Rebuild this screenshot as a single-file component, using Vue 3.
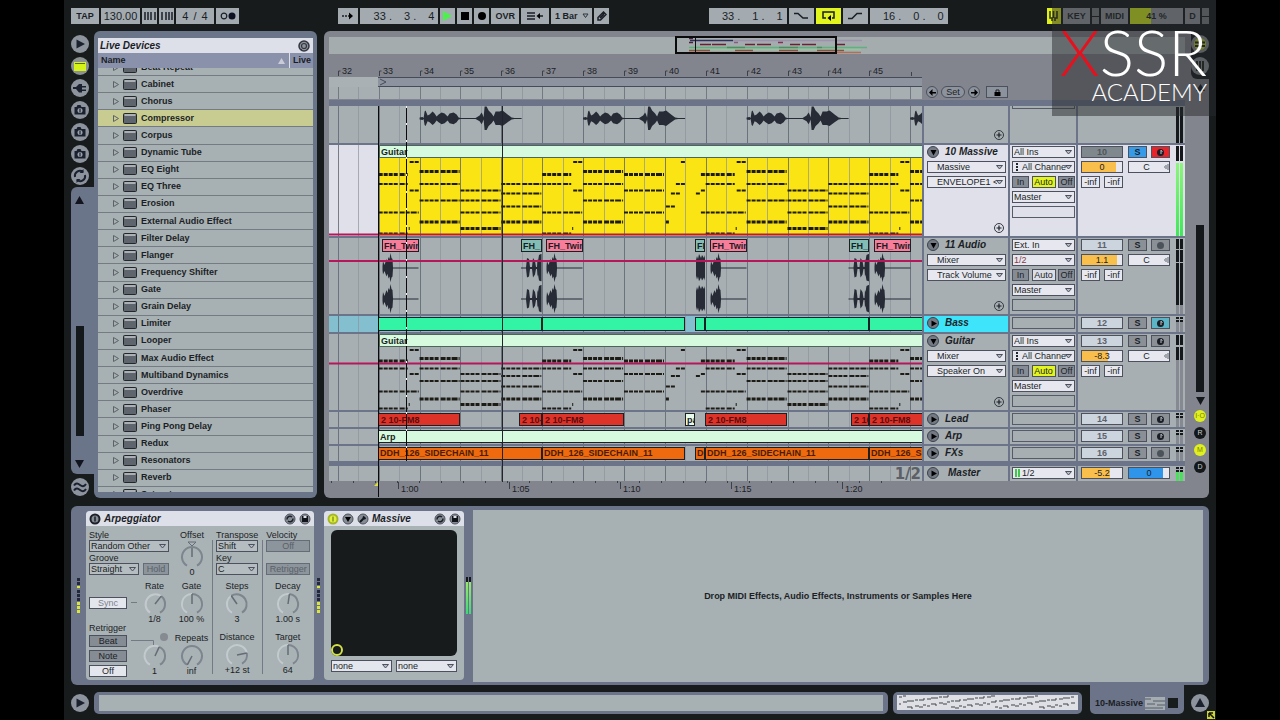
<script setup>
const ORIGIN = 329
const BAR = 40.88
const barX = (n) => 378.7 - ORIGIN + (n - 33) * BAR
const barNumbers = [32, 33, 34, 35, 36, 37, 38, 39, 40, 41, 42, 43, 44, 45]
const gridLines = Array.from({ length: 60 }, (_, i) => ({ x: Math.round(barX(32 + i / 2)) + 0.5, half: i % 2 === 1 }))
const timeMarks = [['1:00', 398], ['1:05', 509], ['1:10', 620], ['1:15', 731], ['1:20', 842]]

const devices = ['Beat Repeat', 'Cabinet', 'Chorus', 'Compressor', 'Corpus', 'Dynamic Tube', 'EQ Eight', 'EQ Three', 'Erosion',
  'External Audio Effect', 'Filter Delay', 'Flanger', 'Frequency Shifter', 'Gate', 'Grain Delay', 'Limiter', 'Looper',
  'Max Audio Effect', 'Multiband Dynamics', 'Overdrive', 'Phaser', 'Ping Pong Delay', 'Redux', 'Resonators', 'Reverb', 'Saturator']

const browserTabs = [
  { label: 'Show browser', kind: 'play' },
  { label: 'Live devices', kind: 'device' },
  { label: 'Plug-in devices', kind: 'plug' },
  { label: 'File browser 1', kind: 'folder' },
  { label: 'File browser 2', kind: 'folder' },
  { label: 'File browser 3', kind: 'folder' },
  { label: 'Hot-swap', kind: 'swap' }
]

/* Mirrored outline around a centre line */
function wave(points, x0, cy) {
  const up = points.map(([x, h]) => `${(x0 + x).toFixed(1)} ${(cy - h).toFixed(1)}`)
  const down = [...points].reverse().map(([x, h]) => `${(x0 + x).toFixed(1)} ${(cy + h * 0.95).toFixed(1)}`)
  return `M${up.join('L')}L${down.join('L')}Z`
}
const vox = [[0, 1], [3, 1.5], [4, 0.5], [5, 7], [6, 8], [8, 3], [10, 4], [13, 7], [15, 5], [17, 2], [19, 4], [22, 6], [25, 5], [28, 2], [30, 5],
  [34, 6], [37, 4], [39, 1], [41, 0.5], [56, 0.5], [60, 3], [62, 6], [63, 4], [64, 1], [65, 12], [67, 12], [69, 8], [72, 5], [74, 2], [76, 7],
  [80, 7], [83, 8], [88, 4], [92, 1], [95, 0.5], [102, 0.5]]
const hit = [[0, 2], [0.5, 7], [2, 3], [4, 9], [5, 6], [6, 11], [7, 9], [8, 15], [9, 10], [10, 9], [10.5, 0.5], [36, 0.5]]
const riser = [[0, 0.4], [5, 0.4], [6, 10], [8, 9], [9, 1], [11, 1], [12, 10], [14, 7], [15, 1], [16, 1], [16.5, 9], [17, 7], [18, 13], [20, 14], [20.5, 14]]
const block = [[0, 8], [1, 12], [2, 9], [3, 14], [5, 10], [6, 13], [8, 10], [9, 13]]

const voxWaves = [34, 38, 42, 46].map((b) => wave(vox, barX(b), 12.5))
const audioWaves = []
for (const cy of [30, 61]) {
  for (const x of [382.5, 546.5, 710.5, 874.5]) audioWaves.push(wave(hit, x - ORIGIN, cy))
  for (const x of [521, 848.5]) audioWaves.push(wave(riser, x - ORIGIN, cy))
  audioWaves.push(wave(block, 696 - ORIGIN, cy))
}

/* Note rows: a..l from highest to lowest pitch */
const pitches = {
  massive: { a: 17, b: 26.5, c: 29.5, d: 39, e: 45.5, f: 48.5, g: 55.5, h: 61.5, i: 67.5, j: 77, k: 83.5, l: 88.5 },
  guitar: { a: 16, b: 24.5, c: 27, d: 34.5, e: 40, f: 42, g: 47, h: 52.5, i: 57.5, j: 65, k: 70.5, l: 74.5 }
}
const bars = {
  A: [['c', 0, 29], ['d', 0, 29], ['i', 0, 40], ['l', 0, 29], ['a', 31, 40], ['e', 31, 40], ['k', 30, 31]],
  B: [['b', 0, 40], ['d', 0, 40], ['g', 0, 40], ['j', 0, 40]],
  C: [['e', 0, 40], ['g', 0, 40], ['i', 0, 40], ['k', 0, 40]],
  D: [['d', 0, 40], ['f', 0, 40], ['h', 0, 40], ['j', 0, 40]],
  E: [['c', 0, 40], ['e', 0, 40], ['i', 0, 40]],
  F: [['j', 1, 4], ['h', 1, 10], ['f', 6, 15], ['d', 11, 20], ['a', 16, 20], ['f', 31, 36], ['c', 36, 40], ['e', 36, 40], ['i', 36, 40]]
}
const song = ['A', 'B', 'C', 'D', 'A', 'B', 'E', 'F', 'A', 'B', 'C', 'D', 'A', 'B']
function notes(kind) {
  const out = []
  song.forEach((name, n) => bars[name].forEach(([p, s, e]) => {
    out.push({ d: `M${(barX(33 + n) + s).toFixed(1)} ${pitches[kind][p]}H${(barX(33 + n) + e).toFixed(1)}`, thick: 'jcbk'.includes(p) })
  }))
  return out
}

const allIns = { from: 'All Ins', channel: 'All Channels', auto: true }
const spans = (pairs, extra) => pairs.map(([a, b, t]) => ({ a, b, t, ...extra }))
const tracks = [
  { id: 't9', kind: 'cut', plus: true, waves: voxWaves, clips: [] },
  { id: 't10', kind: 'tall', name: '10 Massive', selected: true, open: true, dev: 'Massive', par: 'ENVELOPE1 <', io: allIns, num: 10, vol: '0', fill: 84,
    off: true, solo: true, arm: 'on', meter: 'sounding', body: true, notes: notes('massive'), line: 89.5, plus: true,
    clips: spans([[379, 923, 'Guitar']], { k: 'title' }) },
  { id: 't11', kind: 'mid', name: '11 Audio', open: true, dev: 'Mixer', par: 'Track Volume', io: { from: 'Ext. In', channel: '1/2', red: true }, num: 11, vol: '1.1',
    fill: 87, arm: 'dot', meter: 'long', waves: audioWaves, line: 23, plus: true,
    clips: [...spans([[382, 419, 'FH_Twin'], [546, 583, 'FH_Twin'], [710, 747, 'FH_Twin'], [874, 911, 'FH_Twin']], { k: 'pink' }),
      ...spans([[521, 542, 'FH_'], [695, 705, 'FH'], [849, 869, 'FH_']], { k: 'teal' })] },
  { id: 't12', kind: 'bass', name: 'Bass', num: 12, arm: 'blue',
    clips: spans([[378, 542], [542, 685], [695, 705], [705, 869], [869, 925]], { k: 'green' }) },
  { id: 't13', kind: 'mid', name: 'Guitar', open: true, dev: 'Mixer', par: 'Speaker On', io: allIns, num: 13, vol: '-8.3', fill: 64, arm: 'note', meter: 'short',
    notes: notes('guitar'), line: 29.5, plus: true, clips: spans([[379, 923, 'Guitar']], { k: 'title' }) },
  { id: 't14', kind: 'thin', name: 'Lead', num: 14, arm: 'note',
    clips: [...spans([[378, 460, '2 10-FM8'], [519, 542, '2 10-FM8'], [542, 624, '2 10-FM8'], [705, 787, '2 10-FM8'], [851, 869, '2 10-FM8'], [869, 925, '2 10-FM8']], { k: 'red' }),
      { a: 685, b: 695, t: 'pad', k: 'white' }] },
  { id: 't15', kind: 'thin', name: 'Arp', num: 15, arm: 'note', clips: spans([[378, 925, 'Arp']], { k: 'mint' }) },
  { id: 't16', kind: 'thin', name: 'FXs', num: 16, arm: 'dot',
    clips: spans([[378, 542, 'DDH_126_SIDECHAIN_11'], [542, 685, 'DDH_126_SIDECHAIN_11'], [695, 705, 'DDH'], [705, 869, 'DDH_126_SIDECHAIN_11'], [869, 925, 'DDH_126_SIDECHAIN_11']], { k: 'orange' }) },
  { id: 'master', kind: 'master', name: 'Master', vol: '-5.2', fill: 70, meter: 'main', clips: [] }
]
const clipStyle = (c) => ({ left: c.a - ORIGIN + 'px', width: c.b - c.a + 'px' })

const overview = [
  ['#303060', 690, 733, 40.5], ['#a090b0', 733, 862, 40.5], ['#6a2030', 700, 711, 44.5], ['#6a2030', 712, 726, 44.5], ['#6a2030', 745, 755, 44.5],
  ['#6a2030', 757, 771, 44.5], ['#6a2030', 790, 800, 44.5], ['#6a2030', 802, 816, 44.5], ['#6a2030', 835, 845, 44.5], ['#60b080', 689, 862, 47.5],
  ['#4d8d60', 727, 745, 47.5], ['#4d8d60', 779, 798, 47.5], ['#4d8d60', 817, 822, 47.5], ['#60b080', 862, 867, 47.5], ['#8fc79a', 689, 861, 49.5],
  ['#8a5040', 689, 710, 50.5], ['#8a5040', 735, 753, 50.5], ['#8a5040', 779, 798, 50.5], ['#8a5040', 817, 844, 50.5], ['#b07058', 689, 861, 52.5],
  ['#4b2038', 689, 693, 38.5], ['#4b2038', 689, 693, 42.5], ['#806080', 734, 738, 42.5], ['#803050', 778, 783, 42.5]
]

/* Knob face centred on 12,12; angle in degrees clockwise from 12 o'clock */
function hand(angle) {
  const r = (angle * Math.PI) / 180
  return `M12 12L${(12 + 10 * Math.sin(r)).toFixed(1)} ${(12 - 10 * Math.cos(r)).toFixed(1)}`
}
function ring(a0, a1) {
  const pt = (a) => `${(12 + 10 * Math.sin((a * Math.PI) / 180)).toFixed(1)} ${(12 - 10 * Math.cos((a * Math.PI) / 180)).toFixed(1)}`
  return `M${pt(a0)}A10 10 0 ${a1 - a0 > 180 ? 1 : 0} 1 ${pt(a1)}`
}
const knobs = {
  rate: { label: 'Rate', value: '1/8', angle: 38 }, gate: { label: 'Gate', value: '100 %', angle: 0 },
  beat: { label: '', value: '1', angle: 25 }, repeats: { label: 'Repeats', value: 'inf', angle: -152, full: true },
  steps: { label: 'Steps', value: '3', angle: -35 }, distance: { label: 'Distance', value: '+12 st', angle: 78 },
  decay: { label: 'Decay', value: '1.00 s', angle: 8 }, target: { label: 'Target', value: '64', angle: 0 }
}
const knobRows = [[knobs.rate, knobs.gate], [knobs.beat, knobs.repeats]]
const knobCols = [[knobs.steps, knobs.distance], [knobs.decay, knobs.target]]
const miniNotes = Array.from({ length: 44 }, (_, i) => ({ x: 2 + i * 4, y: 2 + ((i * 5) % 11), w: 3 + (i % 3) }))
</script>

<template>
  <div class="screen">
    <div class="app">
      <header class="toolbar">
        <div class="group">
          <button class="tb tap">TAP</button>
          <input class="tb tempo" value="130.00" aria-label="Tempo">
          <button class="tb nudge" aria-label="Nudge down"><svg width="12" height="8"><path d="M1 0v8M4 0v8M7 0v8M11 0v8" stroke="#1b1e26" stroke-width="1.5" /></svg></button>
          <button class="tb nudge" aria-label="Nudge up"><svg width="12" height="8"><path d="M1 0v8M5 0v8M8 0v8M11 0v8" stroke="#1b1e26" stroke-width="1.5" /></svg></button>
          <button class="tb sig"><span>4</span><span>/</span><span>4</span></button>
          <button class="tb metro" aria-label="Metronome"><svg width="16" height="8"><circle cx="4" cy="4" r="2.8" fill="none" stroke="#1b1e26" stroke-width="1.2" /><circle cx="12" cy="4" r="3.5" fill="#0c1020" /></svg></button>
        </div>
        <div class="group">
          <button class="tb follow" aria-label="Follow"><svg width="12" height="8"><path d="M0 4h2M3 4h2M6 4h2" stroke="#1b1e26" stroke-width="1.5" /><path d="M7 .5 11 4 7 7.5z" /></svg></button>
          <button class="tb pos"><span>33 .</span><span>3 .</span><span>4</span></button>
          <button class="tb key1" aria-label="Play"><svg width="11" height="10"><path d="M1 0 10 5 1 10z" fill="#4bf24b" /></svg></button>
          <button class="tb key1" aria-label="Stop"><svg width="8" height="8"><path d="M0 0h8v8H0z" /></svg></button>
          <button class="tb key1" aria-label="Record"><svg width="8" height="8"><circle cx="4" cy="4" r="4" /></svg></button>
          <button class="tb ovr">OVR</button>
          <button class="tb ovr" aria-label="Back to arrangement"><svg width="16" height="8"><path d="M0 1h8M0 4h8M0 7h8M11 4h5" stroke="#1b1e26" stroke-width="1.4" /><path d="M13 1v6L9.5 4z" /></svg></button>
          <button class="tb quant">1 Bar <svg width="7" height="6"><path d="M1 1h5L3.5 4.5z" fill="none" stroke="#30343c" /></svg></button>
          <button class="tb key1" aria-label="Draw mode"><svg width="10" height="10"><path d="M1 9V6.5L6.5 1 9 3.5 3.5 9z" fill="none" stroke="#1b1e26" stroke-width="1.5" /><path d="M3 7 7 3" stroke="#1b1e26" stroke-width="2" /></svg></button>
        </div>
        <div class="group">
          <button class="tb pos"><span>33 .</span><span>1 .</span><span>1</span></button>
          <button class="tb punch" aria-label="Punch in"><svg width="14" height="8"><path d="M0 1.5h4L9 6h5" fill="none" stroke="#1b1e26" stroke-width="1.5" /></svg></button>
          <button class="tb punch lit" aria-label="Loop"><svg width="13" height="10"><path d="M4 7H1V1h11v6h-2" fill="none" stroke="#1b1e26" stroke-width="1.5" /><path d="M9 4v6L5.5 7z" /></svg></button>
          <button class="tb punch" aria-label="Punch out"><svg width="14" height="8"><path d="M0 6.5h4L9 1.5h5" fill="none" stroke="#1b1e26" stroke-width="1.5" /></svg></button>
          <button class="tb pos"><span>16 .</span><span>0 .</span><span>0</span></button>
        </div>
        <div class="group">
          <button class="tb keys" aria-label="Computer keyboard"><svg width="9" height="10"><path d="M1 0v7h2v3M4.500 0v7M8 0v7H6v3" fill="none" stroke="#31350c" stroke-width="1.6" /></svg></button>
          <button class="tb keymap">KEY</button>
          <span class="leds"><i></i><i></i></span>
          <button class="tb keymap">MIDI</button>
          <span class="tb cpu">41 %</span>
          <button class="tb disk">D</button>
          <span class="leds"><i></i><i></i></span>
        </div>
      </header>

      <main class="work">
        <nav class="rail">
          <button v-for="t in browserTabs" :key="t.label" class="round" :class="{ lit: t.kind === 'device' }" :aria-label="t.label">
            <svg width="18" height="18" viewBox="0 0 18 18">
              <path v-if="t.kind === 'play'" d="M5.500 4.500 14 9 5.500 13.500z" />
              <g v-else-if="t.kind === 'device'"><path d="M3 5h12v9H3z" fill="#d5f21a" /><path d="M4 6.500h10" stroke="#5a6812" /></g>
              <path v-else-if="t.kind === 'plug'" d="M2 8h3l3-3h3v2h4v1.500h-4v2h4V12h-4v1.500H8L5 10H2z" />
              <g v-else-if="t.kind === 'folder'"><path d="M3.500 6h2l1-2h3l1 2h4v7.500H3.500z" /><circle cx="9" cy="9.500" r="2.500" fill="#9ba3ad" /><path d="M9 7.500v4" stroke="#1c2130" stroke-width="1.200" /></g>
              <g v-else fill="none" stroke="#1c2130" stroke-width="2"><path d="M4 10a5 5 0 0 1 8-5M14 8a5 5 0 0 1-8 5" /><path d="M12.500 2v4h-4zM5.500 16v-4h4z" fill="#1c2130" stroke="none" /></g>
            </svg>
          </button>
          <div class="scroller">
            <svg width="9" height="8"><path d="M0 8h9L4.500 0z" /></svg>
            <span class="grow-a"></span><span class="thumb"></span><span class="grow-b"></span>
            <svg width="9" height="8"><path d="M0 0h9L4.500 8z" /></svg>
          </div>
          <button class="round" aria-label="Groove pool"><svg width="18" height="18"><path d="M3 7.500c2-3 4-2 6-.5s4 2 6-1M3 12.500c2-3 4-2 6-.5s4 2 6-1" fill="none" stroke="#1c2130" stroke-width="2" /></svg></button>
        </nav>

        <aside class="browser">
          <h2>Live Devices <svg width="12" height="12"><circle cx="6" cy="6" r="5" fill="#8d9199" stroke="#34373f" stroke-width="1.500" /><circle cx="6" cy="6" r="2.500" fill="none" stroke="#34373f" stroke-width="1.200" /><path d="M4 9 3 10" stroke="#34373f" /></svg></h2>
          <div class="cols"><span>Name</span><svg width="7" height="6"><path d="M0 6h7L3.500 0z" fill="#c9ccd8" /></svg><span class="live">Live</span></div>
          <div class="list">
            <ul>
              <li v-for="d in devices" :key="d" :class="{ sel: d === 'Compressor' }">
                <svg class="tri" width="6" height="7"><path d="M.5 .5v6l5-3z" fill="none" stroke="#5c6268" /></svg>
                <svg width="14" height="11"><rect x=".5" y=".5" width="13" height="10" rx="1" fill="#5f656c" stroke="#23272c" /><path d="M1.500 2h11" stroke="#c4cacc" stroke-width="1.500" /></svg>
                {{ d }}
              </li>
            </ul>
          </div>
        </aside>

        <section class="arr">
          <div class="arr-main">
            <svg class="overview" width="100%" height="17">
              <g stroke-width="1.500"><path v-for="(o, i) in overview" :key="i" :d="`M${o[1] - ORIGIN} ${o[3] - 37}H${o[2] - ORIGIN}`" :stroke="o[0]" /></g>
              <path d="M366.500 0V16" stroke="#111" /><rect x="347" y="0" width="160" height="16" fill="none" stroke="#0b0b0b" stroke-width="2" />
            </svg>
            <div class="head">
              <div class="ruler-wrap">
                <svg class="ruler" width="100%" height="23">
                  <g v-for="n in barNumbers" :key="n"><path :d="`M${Math.round(barX(n)) + .5} 22V17h2`" fill="none" stroke="#3c4049" /><text :x="Math.round(barX(n)) + 4" y="20">{{ n }}</text></g>
                  <path d="M582.500 22v-4" stroke="#3c4049" />
                </svg>
                <svg class="loop" width="100%" height="10"><path d="M0 0H49V10H0z" fill="#a9b1b4" /><path d="M49 .5H2000M49 9.500H2000" stroke="#454b57" /><path d="M51 2 57 5 51 8" fill="none" stroke="#454b57" /></svg>
                <svg class="scrub" width="100%" height="12"><path v-for="(g, i) in gridLines" :key="i" :d="`M${g.x} 0V12`" :stroke="g.half ? '#939a9f' : '#737a82'" /></svg>
              </div>
              <div class="locators">
                <button class="loc" aria-label="Previous locator"><svg width="7" height="7"><path d="M0 3.500 3.500 0v7zM3 3h4v1.500H3z" /></svg></button>
                <button class="loc set">Set</button>
                <button class="loc" aria-label="Next locator"><svg width="7" height="7"><path d="M7 3.500 3.500 0v7zM4 3H0v1.500h4z" /></svg></button>
                <button class="loc lock" aria-label="Lock envelopes"><svg width="7" height="7"><path d="M.5 3h6v4h-6z" /><path d="M2 3V1h3v2" fill="none" stroke="#1b1e26" /></svg></button>
              </div>
            </div>

            <div class="tracks">
              <div v-for="t in tracks" :key="t.id" class="track" :class="[t.kind, { selected: t.selected }]">
                <div class="lane">
                  <svg class="art" width="100%" height="100%">
                    <rect v-if="t.body" x="50" y="12" width="100%" height="79" fill="#fbe414" />
                    <path v-for="(g, i) in gridLines" :key="i" :d="`M${g.x} 0V100`" :stroke="g.half ? '#8d939b' : '#5d646f'" :stroke-opacity="g.half ? .7 : .8" />
                    <path v-for="(w, i) in t.waves || []" :key="'w' + i" :d="w" fill="#262b35" />
                    <path v-for="(n, i) in t.notes || []" :key="'n' + i" :d="n.d" stroke="#1c1b14" :stroke-width="n.thick ? 3 : 2" stroke-dasharray="4 1 4 1 4 1 4 2 5 1 4 1 6 1 4 1" />
                  </svg>
                  <div v-for="(c, i) in t.clips" :key="i" class="clip" :class="c.k" :style="clipStyle(c)">{{ c.t }}</div>
                  <svg v-if="t.line" class="art" width="100%" height="100%"><path :d="`M0 ${t.line}H2000`" stroke="#b5175a" stroke-width="2" /></svg>
                  <span v-if="t.kind === 'master'" class="zoomed">1/2</span>
                </div>
                <div class="name-col">
                  <div v-if="t.name" class="heading">
                    <button class="fold" :aria-label="'Unfold ' + t.name"><svg width="11" height="11"><path v-if="t.open" d="M2.500 3h6L5.500 8.500z" /><path v-else d="M3.500 2.500v6L9 5.500z" /></svg></button>
                    <span>{{ t.name }}</span>
                  </div>
                  <template v-if="t.dev">
                    <label class="pick pad"><select :aria-label="t.name + ' device'"><option>{{ t.dev }}</option></select><svg width="7" height="5"><path d="M.5 .5h6L3.500 4z" /></svg></label>
                    <label class="pick pad"><select :aria-label="t.name + ' parameter'"><option>{{ t.par }}</option></select><svg width="7" height="5"><path d="M.5 .5h6L3.500 4z" /></svg></label>
                  </template>
                  <button v-if="t.plus" class="plus" aria-label="Add lane"><svg width="10" height="10"><circle cx="5" cy="5" r="4.500" fill="none" stroke="#343842" /><path d="M5 2.500v5M2.500 5h5" stroke="#1b1e26" stroke-width="1.200" /></svg></button>
                </div>
                <div class="io-col">
                  <template v-if="t.io">
                    <label class="pick"><select :aria-label="t.name + ' input'"><option>{{ t.io.from }}</option></select><svg width="7" height="5"><path d="M.5 .5h6L3.500 4z" /></svg></label>
                    <label class="pick" :class="t.io.red ? 'maroon' : 'chan'"><select :aria-label="t.name + ' channel'"><option>{{ t.io.channel }}</option></select><svg width="7" height="5"><path d="M.5 .5h6L3.500 4z" /></svg></label>
                    <div class="mon"><button>In</button><button class="auto" :class="{ on: t.io.auto }">Auto</button><button>Off</button></div>
                    <label class="pick"><select :aria-label="t.name + ' output'"><option>Master</option></select><svg width="7" height="5"><path d="M.5 .5h6L3.500 4z" /></svg></label>
                    <span class="empty"></span>
                  </template>
                  <label v-else-if="t.kind === 'master'" class="pick cue"><select aria-label="Master output"><option>1/2</option></select><svg width="7" height="5"><path d="M.5 .5h6L3.500 4z" /></svg></label>
                  <span v-else class="empty"></span>
                </div>
                <div class="mix-col">
                  <div v-if="t.num" class="mrow">
                    <button class="num" :class="{ dim: t.off }">{{ t.num }}</button>
                    <button class="sq" :class="{ blue: t.solo }">S</button>
                    <button class="sq" :class="'arm-' + t.arm" :aria-label="'Arm ' + t.name"><svg width="9" height="9"><circle cx="4.500" cy="4.500" r="3.500" /><path v-if="t.arm !== 'dot'" d="M5 2v4M5 2.500l1.500 1" stroke="#b9c2c6" /></svg></button>
                  </div>
                  <div v-if="t.vol" class="mrow">
                    <input class="slide" :value="t.vol" :style="{ '--fill': t.fill + '%' }" :aria-label="t.name + ' volume'">
                    <input v-if="t.num" class="pan" value="C" :aria-label="t.name + ' pan'">
                    <input v-else class="slide cuevol" value="0" aria-label="Cue volume">
                  </div>
                  <div v-if="t.io" class="mrow"><span class="send">-inf</span><span class="send">-inf</span></div>
                  <span class="meter" :class="t.meter"><i></i><i></i></span>
                </div>
              </div>
              <svg class="cursors" width="100%"><path d="M49.500 0V420" stroke="#0b0b0b" /><path d="M77.500 0V355" stroke="#0b0b0b" /><path d="M77.500 0V355" stroke="#f4f4f4" stroke-dasharray="2 15" /><path d="M173.500 0V376" stroke="#22242c" /></svg>
            </div>

            <svg class="time" width="100%" height="17">
              <g v-for="m in timeMarks" :key="m[0]"><path :d="`M${m[1] - ORIGIN + .5} 1v7`" stroke="#3c4049" /><text :x="m[1] - ORIGIN + 3" y="11">{{ m[0] }}</text></g>
              <path v-for="n in 26" :key="n" :d="`M${n * 22 - 19.5} 0v2`" stroke="#3c4049" />
              <path d="M49 1v4h-4z" fill="#e0e23a" />
            </svg>
          </div>

          <div class="arr-side">
            <div class="notch">
              <button class="round lit" aria-label="Arrangement view"><svg width="18" height="18"><circle cx="9" cy="9" r="6" fill="#c5d832" /><path d="M4 7.500h10M4 11h10" stroke="#20241c" stroke-width="2" /></svg></button>
              <button class="round" aria-label="Session view"><svg width="18" height="18"><path d="M6 4v10M9 4v10M12 4v10" stroke="#20241c" stroke-width="2" /></svg></button>
            </div>
            <svg width="9" height="7"><path d="M0 7h9L4.500 0z" /></svg>
            <span class="grow-c"></span><span class="thumb"></span>
            <svg width="9" height="8"><path d="M0 0h9L4.500 8z" /></svg>
            <button class="chip on">I·O</button><button class="chip">R</button><button class="chip on">M</button><button class="chip">D</button>
          </div>
        </section>
      </main>

      <section class="detail">
        <span class="dots"></span>
        <article class="device arp">
          <h3>
            <svg width="12" height="12"><circle cx="6" cy="6" r="4.500" fill="#858b93" stroke="#1c2028" stroke-width="2" /><path d="M6 3.500v5" stroke="#1c2028" stroke-width="1.500" /></svg>
            <span>Arpeggiator</span>
            <svg width="12" height="12"><circle cx="6" cy="6" r="5" fill="#868c94" stroke="#4c515b" /><path d="M3 6.500a3 3 0 0 1 5-2.500M9 5.500a3 3 0 0 1-5 2.500" fill="none" stroke="#1c2028" stroke-width="1.500" /></svg>
            <svg width="12" height="12"><circle cx="6" cy="6" r="5" fill="#868c94" stroke="#4c515b" /><path d="M3 3h6v6H3z" fill="#10131a" /><path d="M4.500 3h3v2h-3z" fill="#dfe1ea" /></svg>
          </h3>
          <div class="arp-body">
            <div class="sec first">
              <div class="top">
                <div class="form">
                  <label for="style">Style</label>
                  <span class="pick"><select id="style"><option>Random Other</option></select><svg width="7" height="5"><path d="M.5 .5h6L3.500 4z" /></svg></span>
                  <label for="groove">Groove</label>
                  <div class="pair"><span class="pick"><select id="groove"><option>Straight</option></select><svg width="7" height="5"><path d="M.5 .5h6L3.500 4z" /></svg></span><button class="flat ghost hold">Hold</button></div>
                </div>
                <div class="knob offset"><span>Offset</span><svg width="24" height="26"><path d="M8 1h8l-4 4z" fill="none" stroke="#656c76" /><g transform="translate(0 4)"><path :d="ring(-150, 150)" fill="none" stroke="#7d858e" stroke-width="2" /><path d="M12 12V3" stroke="#656c76" stroke-width="1.500" /></g></svg><span>0</span></div>
              </div>
              <div v-for="(row, r) in knobRows" :key="r" class="krow" :class="'k' + r">
                <div class="left">
                  <button v-if="r === 0" class="flat white sync">Sync</button>
                  <template v-else><span class="lab">Retrigger</span><button class="flat">Beat</button><button class="flat">Note</button><button class="flat white">Off</button></template>
                </div>
                <svg class="link" :width="r ? 28 : 6" height="6"><path :d="r ? 'M0 1.5H22.5V6' : 'M0 3.5H6'" fill="none" stroke="#737a83" /></svg>
                <div v-for="k in row" :key="k.value" class="knob"><span>{{ k.label }}<i v-if="!k.label" class="led"></i></span><svg width="24" height="22"><path :d="ring(-150, k.full ? 150 : k.angle)" fill="none" :stroke="k.full ? '#7d858e' : '#c3cacf'" stroke-width="2" /><path v-if="!k.full" :d="ring(k.angle, 150)" fill="none" stroke="#7d858e" stroke-width="2" /><path :d="hand(k.angle)" stroke="#656c76" stroke-width="1.500" /></svg><span>{{ k.value }}</span></div>
              </div>
            </div>
            <div v-for="(col, c) in knobCols" :key="c" class="sec" :class="'s' + c">
              <div v-if="c === 0" class="form"><label for="transpose">Transpose</label><span class="pick"><select id="transpose"><option>Shift</option></select><svg width="7" height="5"><path d="M.5 .5h6L3.500 4z" /></svg></span><label for="key">Key</label><span class="pick"><select id="key"><option>C</option></select><svg width="7" height="5"><path d="M.5 .5h6L3.500 4z" /></svg></span></div>
              <div v-else class="form"><span class="lab">Velocity</span><button class="flat ghost">Off</button><span class="lab"></span><button class="flat ghost">Retrigger</button></div>
              <div v-for="k in col" :key="k.label" class="knob"><span>{{ k.label }}</span><svg width="24" height="22"><path :d="ring(-150, k.angle)" fill="none" stroke="#c3cacf" stroke-width="2" /><path :d="ring(k.angle, 150)" fill="none" stroke="#7d858e" stroke-width="2" /><path :d="hand(k.angle)" stroke="#656c76" stroke-width="1.500" /></svg><span>{{ k.value }}</span></div>
            </div>
          </div>
        </article>
        <span class="dots mid"></span>
        <article class="device massive">
          <h3>
            <svg width="12" height="12"><circle cx="6" cy="6" r="4.500" fill="#dff03a" stroke="#a5b52a" stroke-width="2" /><path d="M6 3.500v5" stroke="#8a9626" stroke-width="1.500" /></svg>
            <svg width="12" height="12"><circle cx="6" cy="6" r="5" fill="#868c94" stroke="#4c515b" /><path d="M3 4h6L6 9z" /></svg>
            <svg width="12" height="12"><circle cx="6" cy="6" r="5" fill="#868c94" stroke="#4c515b" /><path d="M3 9 7 5M6 3.500 8.500 6" stroke="#14171f" stroke-width="2" /></svg>
            <span>Massive</span>
            <svg width="12" height="12"><circle cx="6" cy="6" r="5" fill="#868c94" stroke="#4c515b" /><path d="M3 6.500a3 3 0 0 1 5-2.500M9 5.500a3 3 0 0 1-5 2.500" fill="none" stroke="#1c2028" stroke-width="1.500" /></svg>
            <svg width="12" height="12"><circle cx="6" cy="6" r="5" fill="#868c94" stroke="#4c515b" /><path d="M3 3h6v6H3z" fill="#10131a" /><path d="M4.500 3h3v2h-3z" fill="#dfe1ea" /></svg>
          </h3>
          <div class="xy"><i></i></div>
          <div class="pair xy-pick">
            <label class="pick"><select aria-label="X parameter"><option>none</option></select><svg width="7" height="5"><path d="M.5 .5h6L3.500 4z" /></svg></label>
            <label class="pick"><select aria-label="Y parameter"><option>none</option></select><svg width="7" height="5"><path d="M.5 .5h6L3.500 4z" /></svg></label>
          </div>
        </article>
        <span class="vu"><i></i><i></i></span>
        <div class="drop">Drop MIDI Effects, Audio Effects, Instruments or Samples Here</div>
      </section>

      <footer class="status">
        <button class="round" aria-label="Show info"><svg width="18" height="18"><path d="M5.500 4.500 14 9 5.500 13.500z" /></svg></button>
        <div class="info"><span></span></div>
        <div class="mini"><svg width="100%" height="15"><path v-for="(m, i) in miniNotes" :key="i" :d="`M${m.x} ${m.y}h${m.w}M${m.x} ${(m.y + 6) % 13 + 1}h${m.w - 1}`" stroke="#3f4247" /></svg></div>
        <div class="tab"><span>10-Massive</span><svg width="20" height="13"><path d="M0 0h20v13H0z" fill="#a5adb3" /><path d="M0 2h6M8 4h12M2 7h8M12 8h8M0 11h18" stroke="#565c66" /></svg><svg width="12" height="12"><path d="M1 1h10v10H1z" fill="#181c1d" /></svg></div>
        <button class="round" aria-label="Show detail"><svg width="18" height="18"><path d="M9 4 14 13H4z" /></svg></button>
      </footer>

      <svg class="grip" width="8" height="8"><path d="M0 0h8v8H0z" fill="#cfd435" /><path d="M2 2h4M2 2v4M2 2l5 5" stroke="#14160c" stroke-width="1.500" /></svg>
      <div class="brand"><p><b>X</b>SSR</p><p class="sub">ACADEMY</p></div>
    </div>
  </div>
</template>

<style>
body { background: #000; }
</style>

<style scoped>
* { box-sizing: border-box; margin: 0; }
.screen { min-height: 100vh; padding: 0 5%; background: #000; }
.app { position: relative; min-height: 100vh; padding: 8px 7px 6px; background: #171b1c; display: flex; flex-direction: column; font: 9px/11px "Liberation Sans", Arial, sans-serif; color: #1b1e26; overflow: hidden; }
button, input, select { font: inherit; color: inherit; border: 0; border-radius: 0; padding: 0; background: none; min-width: 0; }
button { display: flex; align-items: center; justify-content: center; }
svg { display: block; flex: none; }

.toolbar { display: flex; justify-content: space-between; height: 23px; align-items: flex-start; }
.group { display: flex; gap: 2px; }
.tb { height: 16px; background: #a3abb1; font-weight: bold; }
.tap { width: 28px; }
.tempo { width: 39px; text-align: center; font: 11px/16px "Liberation Sans", Arial, sans-serif; }
.nudge { width: 15px; }
.sig { width: 38px; font-size: 11px; font-weight: normal; gap: 5px; }
.metro { width: 23px; }
.follow { width: 20px; }
.pos { width: 78px; font-size: 11px; font-weight: normal; justify-content: flex-end; gap: 12px; padding-right: 4px; }
.key1 { width: 15px; }
.ovr { width: 28px; }
.quant { width: 41px; gap: 4px; }
.punch { width: 25px; }
.lit.tb { background: #e2f51c; }
.keys { width: 14px; background: #dff01c; }
.keymap { width: 27px; background: #989ea4; }
.cpu { width: 53px; line-height: 16px; text-align: center; background: linear-gradient(90deg, #d8f41a 40%, #989ea4 40%); }
.disk { width: 15px; background: #989ea4; }
.leds { display: flex; flex-direction: column; gap: 1px; width: 7px; height: 16px; }
.leds i { flex: 1; background: #7d8286; }

.work { display: flex; }
.rail { width: 23px; display: flex; flex-direction: column; align-items: flex-start; gap: 4px; padding: 4px 0 2px; }
.round { width: 18px; height: 18px; flex: none; border-radius: 50%; background: #8d949d; }
.round svg { fill: #1c2130; }
.round.lit { background: #8a9190; }
.scroller { flex: 1; width: 100%; margin-top: -2px; background: #6b7589; border-radius: 6px 0 0 6px; display: flex; flex-direction: column; align-items: center; padding: 9px 6px 6px 0; }
.scroller svg { fill: #12151d; }
.thumb { width: 8px; flex: 107 1 0; background: #14181a; }
.grow-a { flex: 120 1 0; }
.grow-b { flex: 24 1 0; }
.browser { width: 223px; background: #6b7589; border-radius: 6px; padding: 7px 4px 6px; display: flex; flex-direction: column; }
.browser h2 { height: 15px; background: #dddfe9; padding: 0 3px 0 2px; display: flex; justify-content: space-between; align-items: center; font: italic bold 10px/15px "Liberation Sans", Arial, sans-serif; }
.cols { height: 15px; display: flex; align-items: center; padding-left: 3px; font-weight: bold; background: #8991ab; }
.cols svg { margin-left: auto; margin-right: 4px; }
.live { width: 24px; height: 15px; border-left: 1px solid #dddfe9; padding-left: 3px; line-height: 15px; }
.list { flex: 1 1 0; min-height: 0; overflow: hidden; background: #a7b0b2; }
.list ul { list-style: none; padding: 0; margin-top: -9px; height: calc(100% + 21px); display: grid; grid-template-rows: repeat(26, minmax(0, 1fr)); }
.list li { display: flex; align-items: center; gap: 4px; padding-left: 15px; font-weight: bold; border-bottom: 1px solid #747b83; min-height: 0; white-space: nowrap; }
.list li.sel { background: #c9cc91; }

.arr { flex: 1; min-width: 0; margin-left: 7px; background: #82858e; border-radius: 6px; display: flex; padding-left: 5px; }
.arr-main { flex: 1; min-width: 0; padding-top: 6px; }
.overview { background: #a5acae; overflow: visible; }
.head { display: flex; }
.ruler-wrap { flex: 1; min-width: 0; overflow: hidden; margin-right: 2px; }
.ruler text, .time text { font-size: 9px; fill: #1b1e26; }
.ruler, .time { overflow: hidden; }
.loop { background: #8d949f; }
.scrub { background: #a7afb2; }
.locators { width: 261px; display: flex; align-items: flex-end; gap: 3px; padding: 0 0 1px 2px; }
.loc { width: 12px; height: 12px; border: 1px solid #4a505c; border-radius: 6px; background: #8d939c; }
.loc.set { width: 24px; }
.loc.lock { width: 22px; border-radius: 0; margin-left: 3px; }
.tracks { position: relative; margin-top: 1px; border-top: 6px solid #6b7489; background: #6b7489; display: flex; flex-direction: column; gap: 2px; }
.track { display: grid; grid-template-columns: minmax(0, 1fr) 84px 66px 107px; gap: 2px; height: 15px; }
.track > div { background: #a7afb2; position: relative; }
.track.cut { height: 37px; }
.track.tall { height: 91px; }
.track.mid { height: 76px; }
.track.bass { height: 16px; }
.track.master { margin-top: 3px; }
.track.selected > div { background: #dfe0e9; }
.track.bass > .lane { background: #84bfd0; }
.track.bass > .name-col { background: #3ee4fa; }
.lane { overflow: hidden; }
.art, .cursors { position: absolute; left: 0; top: 0; }
.cursors { pointer-events: none; height: calc(100% + 16px); }
.clip { position: absolute; top: 1px; bottom: 1px; border: 1px solid #1c2025; padding-left: 2px; font-weight: bold; overflow: hidden; white-space: nowrap; line-height: 12px; }
.clip.title { top: 0; bottom: auto; height: 13px; background: #d6fadd; border-color: #4e6657; border-right: 0; padding-left: 1px; }
.clip.pink, .clip.teal { bottom: auto; height: 13px; padding-left: 1px; }
.clip.pink { background: #f77d9a; }
.clip.teal { background: #84bdb4; }
.clip.green { background: #32f4a4; }
.clip.red { background: #dd3328; color: #5a0d10; }
.clip.mint { background: #d6fadd; padding-left: 1px; }
.clip.white { background: #e6fbe9; padding-left: 1px; }
.clip.orange { background: #ef6a0e; color: #4a1c04; padding-left: 1px; line-height: 11px; }
.zoomed { position: absolute; right: 1px; top: 0; font: bold 15px/16px "DejaVu Sans", sans-serif; color: #5c5f66; }
.track > .name-col { padding: 1px 2px 0 3px; display: flex; flex-direction: column; gap: 3px; }
.heading { display: flex; align-items: center; gap: 6px; height: 12px; font: italic bold 10px/12px "Liberation Sans", Arial, sans-serif; }
.master .heading { gap: 9px; }
.fold { width: 12px; height: 12px; border-radius: 50%; border: 1px solid #3d424c; background: #747a83; }
.plus { position: absolute; right: 4px; bottom: 3px; }
.pick { position: relative; display: block; height: 12px; border: 1px solid #4c515d; background: #e6e7ef; }
.pick select { display: block; appearance: none; width: 100%; height: 10px; line-height: 10px; padding: 0 8px 0 1px; outline: 0; overflow: hidden; }
.pick svg { position: absolute; right: 2px; top: 3px; fill: #b5b9c4; stroke: #4c515d; pointer-events: none; }
.pick.pad select, .pick.chan select, .pick.cue select { padding-left: 9px; }
.pick.chan::before, .pick.cue::before { content: ""; position: absolute; left: 3px; top: 1px; width: 2px; height: 8px; background: repeating-linear-gradient(#23262e 0 2px, transparent 2px 3px); }
.pick.cue::before { width: 5px; background: linear-gradient(90deg, #3fc84a 2px, transparent 2px 3px, #3fc84a 3px); left: 2px; }
.pick.maroon select { color: #8a3a48; }
.track > .io-col { padding: 1px 1px 0 2px; display: flex; flex-direction: column; gap: 3px; }
.track.cut > .io-col { padding-top: 0; }
.cut .empty { height: 3px; border-top: 0; }
.empty { height: 12px; border: 1px solid #555b67; }
.mon { display: flex; justify-content: space-between; height: 12px; }
.mon button { width: 17px; border: 1px solid #4c515d; background: #868c95; }
.mon .auto { width: 24px; background: #dcdee7; }
.mon .auto.on { background: #e2f51c; }
.track > .mix-col { padding: 1px 0 0 3px; display: flex; flex-direction: column; gap: 3px; }
.mrow { display: flex; gap: 4px; height: 12px; }
.mrow .num { width: 42px; border: 1px solid #4c515d; background: #ccd4dd; color: #5c626c; font-weight: bold; }
.mrow .num.dim { background: #7f888d; color: #4f565c; }
.sq { width: 19px; border: 1px solid #4c515d; background: #8a9096; font-weight: bold; margin-left: 1px; }
.sq + .sq { margin-left: 0; }
.sq svg { fill: #1b1e26; }
.sq.blue { background: #379be8; }
.arm-on { background: #e8232a; }
.arm-blue { background: #5bb5c6; }
.arm-dot svg { fill: #4c525a; }
.slide { width: 42px; border: 1px solid #4c515d; text-align: center; line-height: 10px; background: linear-gradient(90deg, #f8bf4c var(--fill), #e6e7ef var(--fill)); }
.pan { width: 42px; margin-left: 1px; border: 1px solid #4c515d; text-align: center; line-height: 10px; padding-right: 5px; background: conic-gradient(from 59deg at 34px 5px, #a0a5ad 62deg, #e6e7ef 0); }
.slide.cuevol { margin-left: 1px; background: linear-gradient(90deg, #2f95ea 84%, #e6e7ef 84%); }
.send { width: 19px; border: 1px solid #4c515d; background: #e6e7ef; line-height: 10px; text-align: center; }
.meter { position: absolute; right: 2px; top: 1px; bottom: 0; width: 7px; display: flex; gap: 1px; }
.meter i { flex: 1; background: linear-gradient(#14181a 0 2px, #a7afb2 2px 3px, #14181a 3px 5px, #858a92 5px); }
.cut .meter i { background: #14181a; }
.meter.sounding i { background: linear-gradient(#14181a 15px, #dfe0e9 15px 17px, #8df57c 17px, #3fe85a); }
.meter.long i { background: linear-gradient(#14181a 10px, #a7afb2 10px 11px, #14181a 11px 23px, #a7afb2 23px 24px, #14181a 24px 66px, #858a92 66px); }
.meter.short i { background: linear-gradient(#14181a 10px, #a7afb2 10px 12px, #14181a 12px 25px, #858a92 25px); }
.meter.main i { background: linear-gradient(#14181a 0 2px, #a7afb2 2px 3px, #14181a 3px 5px, #4be05c 5px); }

.arr-side { width: 24px; display: flex; flex-direction: column; align-items: center; gap: 5px; padding: 0 0 25px 6px; }
.arr-side > svg { fill: #14181a; }
.notch { align-self: stretch; height: 48px; display: flex; flex-direction: column; gap: 4px; padding-top: 4px; background: #171b1c; border-radius: 0 0 0 6px; }
.grow-c { flex: 125 1 0; }
.arr-side .thumb { flex: 168 1 0; }
.chip { width: 12px; height: 12px; border-radius: 50%; background: #14181a; color: #c7ccd2; font-size: 7px; line-height: 12px; }
.chip.on { background: #dff01c; color: #7a8214; }

.detail { margin-top: 8px; background: #6b7489; border-radius: 6px; padding: 5px 6px 5px 0; display: flex; height: 179px; }
.dots { width: 15px; flex: none; background: repeating-linear-gradient(#23283a 0 3px, #6b7489 3px 4px) 6px 67px / 3px 8px no-repeat, repeating-linear-gradient(#dbe63a 0 3px, #6b7489 3px 4px) 6px 91px / 3px 12px no-repeat, linear-gradient(#dbe63a, #dbe63a) 6px 74px / 3px 3px no-repeat, repeating-linear-gradient(#23283a 0 3px, #6b7489 3px 4px) 6px 79px / 3px 12px no-repeat; }
.dots.mid { width: 10px; background-position: 3px 67px, 3px 91px, 3px 74px, 3px 79px; }
.device { background: #a9b2b4; border-radius: 4px; overflow: hidden; flex: none; }
.device h3 { height: 15px; background: #dddfe9; display: flex; align-items: center; gap: 3px; padding: 0 3px; font: italic bold 10px/15px "Liberation Sans", Arial, sans-serif; }
.device h3 span { flex: 1; }
.arp { width: 228px; }
.arp-body { display: flex; padding: 4px 2px 0 3px; }
.sec { display: flex; flex-direction: column; }
.sec.first { width: 123px; }
.s0, .s1 { width: 51px; padding: 0 4px; align-items: center; background: linear-gradient(#737a83, #737a83) left 10px / 1px 134px no-repeat; }
.sec .form { height: 51px; display: flex; flex-direction: column; align-self: stretch; }
.s1 .form { width: 44px; }
.form label, .lab { height: 10px; line-height: 10px; }
.form .pick, .form .flat { margin-bottom: 1px; }
.sec .pick { background: #b5bdc0; }
.top { display: flex; height: 51px; }
.top .form { width: 80px; }
.pair { display: flex; gap: 4px; }
.pair .pick { flex: 1; }
.flat { height: 12px; border: 1px solid #4c515d; background: #858c94; }
.flat.ghost { background: #8d959c; color: #5a6169; border-color: #656c76; }
.flat.white { background: #e4e6ee; }
.hold { width: 26px; flex: none; }
.knob { width: 37px; display: flex; flex-direction: column; align-items: center; white-space: nowrap; }
.knob > span { height: 11px; line-height: 11px; }
.sec > .knob { height: 51px; }
.offset { width: 43px; padding-left: 3px; }
.krow { display: flex; height: 44px; position: relative; }
.krow.k1 { height: 52px; align-items: flex-end; }
.left { width: 38px; display: flex; flex-direction: column; gap: 3px; margin-right: 9px; flex: none; }
.left .flat { width: 38px; }
.k1 .left .lab { height: 9px; }
.flat.sync { margin-top: 16px; color: #7d828c; }
.link { position: absolute; left: 42px; top: 18px; }
.k1 .link { top: 14px; }
.led { display: block; width: 8px; height: 8px; border-radius: 50%; background: #858b91; margin-left: 19px; }
.massive { width: 140px; display: flex; flex-direction: column; }
.xy { height: 126px; margin: 4px 7px 0; background: #171b1c; border-radius: 6px; display: flex; align-items: flex-end; }
.xy i { width: 12px; height: 12px; border-radius: 50%; border: 2px solid #d3e046; }
.xy-pick { margin: 4px 7px 0; }
.massive .pair .pick { background: #e4e6ee; }
.vu { width: 9px; flex: none; display: flex; gap: 1px; padding: 66px 2px; }
.vu i { flex: 1; background: linear-gradient(#14181a 5px, #9ae86e 5px, #3fd878); }
.drop { flex: 1; margin: -1px 0 -2px; background: #a7b0b2; display: flex; align-items: center; justify-content: center; font-weight: bold; }

.status { margin-top: 7px; display: flex; height: 22px; align-items: center; }
.status .round { margin-right: 5px; }
.info, .mini { height: 22px; background: #6b7489; border-radius: 5px; padding: 3px 5px; display: flex; }
.info { flex: 1; }
.info span { flex: 1; background: #a7b0b2; }
.mini { width: 189px; margin-left: 5px; padding: 3px 4px; }
.mini svg { background: #dfe0e6; }
.tab { width: 94px; align-self: stretch; margin: -7px 0 0 8px; padding: 7px 2px 0 5px; background: #6b7489; border-radius: 0 0 5px 5px; display: flex; align-items: center; gap: 2px; font-weight: bold; white-space: nowrap; }
.status .tab + .round { margin: 0 0 0 7px; }
.grip { position: absolute; right: 1px; bottom: 1px; }
.brand { position: absolute; top: 0; right: 0; width: 164px; height: 116px; padding: 17px 9px 0 0; background: rgba(40, 42, 44, .5); color: #fff; text-align: right; font-family: Lato, "Open Sans", sans-serif; font-weight: 300; pointer-events: none; }
.brand p { font-size: 64px; line-height: 70px; white-space: nowrap; }
.brand b { font-weight: 300; color: #e8101c; }
.brand .sub { font-size: 24px; line-height: 10px; }
</style>
